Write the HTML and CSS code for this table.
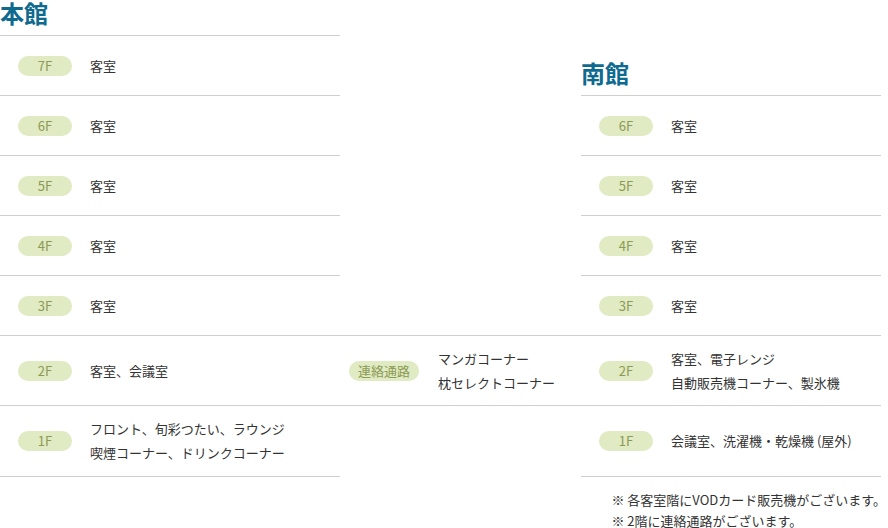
FILE: index.html
```html
<!DOCTYPE html>
<html lang="ja">
<head>
<meta charset="utf-8">
<title>フロアガイド</title>
<link rel="stylesheet" href="styles.css">
</head>
<body>
<div class="floors">
  <h2 class="heading main-head">本館</h2>
  <div class="row main r2"><span class="pill">7F</span><p class="desc">客室</p></div>
  <div class="row main r3"><span class="pill">6F</span><p class="desc">客室</p></div>
  <div class="row main r4"><span class="pill">5F</span><p class="desc">客室</p></div>
  <div class="row main r5"><span class="pill">4F</span><p class="desc">客室</p></div>
  <div class="row main r6"><span class="pill">3F</span><p class="desc">客室</p></div>
  <div class="row main r7"><span class="pill">2F</span><p class="desc">客室、会議室</p></div>
  <div class="row main r8"><span class="pill">1F</span><p class="desc">フロント、旬彩つたい、ラウンジ<br>喫煙コーナー、ドリンクコーナー</p></div>

  <div class="row link r7"><span class="pill pill-wide">連絡通路</span><p class="desc">マンガコーナー<br>枕セレクトコーナー</p></div>

  <h2 class="heading south-head">南館</h2>
  <div class="row south r3"><span class="pill">6F</span><p class="desc">客室</p></div>
  <div class="row south r4"><span class="pill">5F</span><p class="desc">客室</p></div>
  <div class="row south r5"><span class="pill">4F</span><p class="desc">客室</p></div>
  <div class="row south r6"><span class="pill">3F</span><p class="desc">客室</p></div>
  <div class="row south r7"><span class="pill">2F</span><p class="desc">客室、電子レンジ<br>自動販売機コーナー、製氷機</p></div>
  <div class="row south r8"><span class="pill">1F</span><p class="desc">会議室、洗濯機・乾燥機 (屋外)</p></div>
  <ul class="notes">
    <li>※ 各客室階にVODカード販売機がございます。</li>
    <li>※ 2階に連絡通路がございます。</li>
  </ul>
</div>
</body>
</html>
```

FILE: styles.css
```css
html, body {
  margin: 0;
  padding: 0;
  background: #fff;
}
body {
  font-family: "Noto Sans CJK JP", "Noto Sans", sans-serif;
  color: #333;
}
.floors {
  display: grid;
  grid-template-columns: 340px 241px 300px;
  grid-template-rows: 36px repeat(5, 60px) 70px 71px auto;
}
.heading {
  margin: 0;
  font-size: 24px;
  font-weight: 700;
  color: #0f6a90;
  line-height: 28px;
  display: flex;
  align-items: flex-end;
  padding-bottom: 8px;
  border-bottom: 1px solid #cfcfcf;
  box-sizing: border-box;
}
.main-head { grid-column: 1; grid-row: 1; }
.south-head { grid-column: 3; grid-row: 2; }
.main { grid-column: 1; }
.link { grid-column: 2; }
.south { grid-column: 3; }
.r2 { grid-row: 2; }
.r3 { grid-row: 3; }
.r4 { grid-row: 4; }
.r5 { grid-row: 5; }
.r6 { grid-row: 6; }
.r7 { grid-row: 7; }
.r8 { grid-row: 8; }
.row {
  display: flex;
  align-items: center;
  gap: 18px;
  padding-left: 18px;
  border-bottom: 1px solid #cfcfcf;
  box-sizing: border-box;
}
.link {
  padding-left: 9px;
  gap: 19px;
  box-shadow: 0 -1px 0 #cfcfcf;
}
.pill {
  flex-shrink: 0;
  width: 54px;
  height: 20px;
  border-radius: 10px;
  background: #e0eac3;
  color: #8c9a55;
  font-size: 13px;
  line-height: 20px;
  text-align: center;
}
.pill-wide {
  width: 70px;
}
.desc {
  margin: 0;
  font-size: 13px;
  line-height: 24px;
  color: #333;
}
.notes {
  grid-column: 3;
  grid-row: 9;
  justify-self: end;
  list-style: none;
  margin: 0 -5px 0 0;
  padding: 12px 0 0;
  font-size: 13px;
  line-height: 21px;
  color: #333;
}
```
